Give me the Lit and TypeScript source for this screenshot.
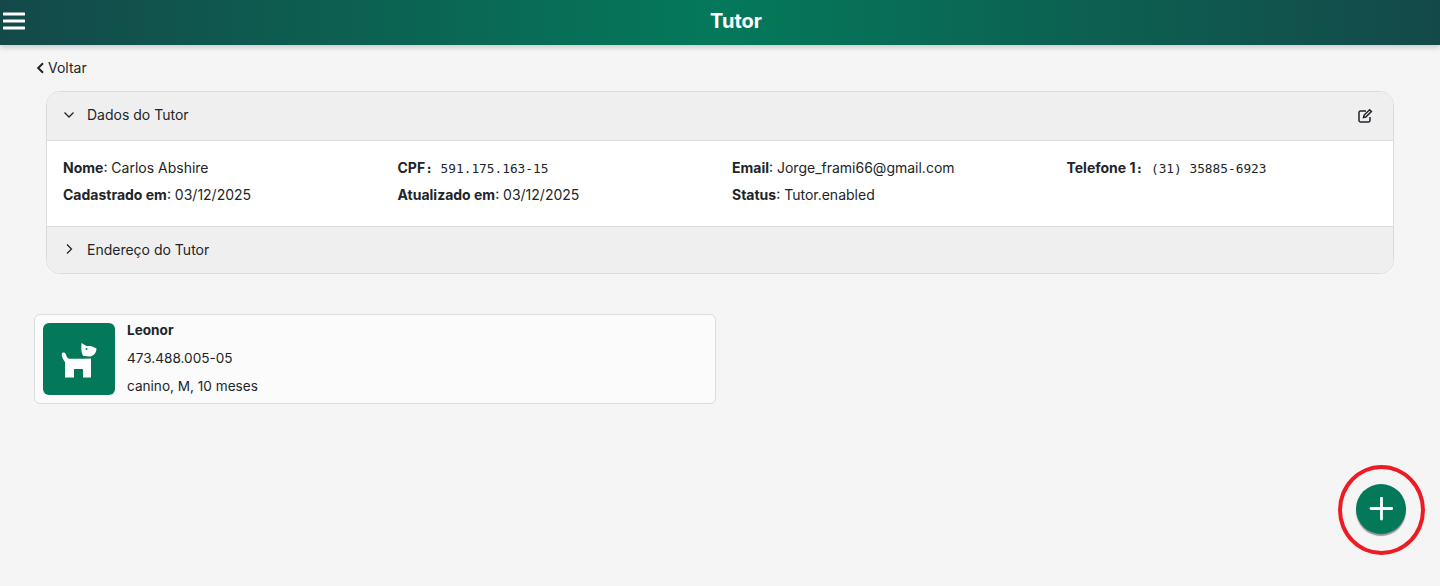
import { LitElement, html, css } from "lit";
import { customElement } from "lit/decorators.js";

@customElement("app-root")
export class AppRoot extends LitElement {
  static styles = css`
    :host { display: block; position: relative; height: 586px; overflow: hidden; background: #f5f5f5; color: #212529;
      font-family: Inter, "Liberation Sans", sans-serif; font-size: 14px; }
    .topbar { height: 45px; display: flex; align-items: center; justify-content: center; position: relative;
      background: linear-gradient(90deg, #14494a 0%, #04795a 50%, #14494a 100%); box-shadow: 0 2px 6px rgba(0,0,0,.2); }
    .topbar h1 { margin: 0; color: #fff; font-size: 20px; font-weight: 700; line-height: 24px; position: relative; left: 16px; top: -2px; }
    .menu { position: absolute; left: 3px; top: 12px; width: 22px; height: 18px; display: block; }
    .back { display: flex; align-items: center; gap: 3px; margin: 14px 0 0 36px; height: 18px; line-height: 18px; color: #212529; }
    .back svg { width: 9px; height: 12px; }
    .acc { margin: 14px 46px 0 46px; border: 1px solid #dcdcdc; border-radius: 14px; overflow: hidden; background: #fff; }
    .acc-head { display: flex; align-items: center; background: #efefef; padding: 0 20px 0 16px; color: #212529; }
    .acc-head span { position: relative; top: -1px; }
    .acc-head.a span { top: -2px; }
    .acc-head.a { height: 48px; border-bottom: 1px solid #dcdcdc; }
    .acc-head.b { height: 46px; border-top: 1px solid #dcdcdc; }
    .chev { width: 12px; height: 12px; margin-right: 12px; flex: none; position: relative; top: -1px; }
    .edit { margin-left: auto; width: 16px; height: 16px; }
    .acc-body { height: 85px; box-sizing: border-box; padding: 13px 16px 0 16px; display: grid;
      grid-template-columns: repeat(4, 334.5px); grid-auto-rows: 27px; align-items: center; }
    .acc-body b { font-weight: 700; }
    .mono { font-family: "DejaVu Sans Mono", monospace; font-size: 12.8px; }
    .card { margin: 40px 0 0 34px; width: 682px; height: 90px; box-sizing: border-box; display: flex; gap: 12px; padding: 8px;
      background: #fbfbfb; border: 1px solid #dcdcdc; border-radius: 6px; }
    .pet { width: 72px; height: 72px; box-sizing: border-box; padding-top: 2px; border-radius: 6px; background: #04795a; display: flex; align-items: center; justify-content: center; flex: none; }
    .pet svg { width: 48px; height: 44px; display: block; }
    .info { display: flex; flex-direction: column; margin-top: -7px; font-size: 13.6px; }
    .info div { height: 28px; line-height: 28px; }
    .info .n { font-weight: 700; }
    .fab { position: absolute; left: 1356px; top: 484px; width: 50px; height: 50px; border-radius: 50%; background: #04795a; border: 0; padding: 0;
      box-shadow: 0 2px 1px rgba(0,0,0,.4); display: flex; align-items: center; justify-content: center; }
    .fab svg { width: 24px; height: 24px; }
    .ring { position: absolute; left: 1338px; top: 465px; width: 87px; height: 90px; box-sizing: border-box; border: 4.5px solid #ed1c24; border-radius: 50%; pointer-events: none; }
  `;

  render() {
    return html`
      <div class="topbar">
        <svg class="menu" viewBox="0 0 22 18"><path d="M1 2h20M1 9h20M1 16h20" stroke="#fff" stroke-width="3" stroke-linecap="round" fill="none"/></svg>
        <h1>Tutor</h1>
      </div>
      <div class="back">
        <svg viewBox="0 0 9 12"><path d="M7 1.2 2.2 6 7 10.8" stroke="#212529" stroke-width="2" fill="none"/></svg>
        <span>Voltar</span>
      </div>
      <div class="acc">
        <div class="acc-head a">
          <svg class="chev" viewBox="0 0 12 12"><path d="M1.500 3.500 6 8 10.500 3.500" stroke="#212529" stroke-width="1.300" fill="none"/></svg>
          <span>Dados do Tutor</span>
          <svg class="edit" viewBox="0 0 16 16" fill="none" stroke="#212529" stroke-width="1.500">
            <path d="M13 9v3.600a1.400 1.400 0 0 1-1.400 1.400H3.400A1.400 1.400 0 0 1 2 12.600V4.400A1.400 1.400 0 0 1 3.400 3H9"/>
            <path d="M6.500 9.600 7 7.300l5.600-5.500 1.800 1.800L8.800 9.100z"/>
          </svg>
        </div>
        <div class="acc-body">
          <div><b>Nome</b>: Carlos Abshire</div>
          <div><b>CPF</b><span class="mono"><b>:</b> 591.175.163-15</span></div>
          <div><b>Email</b>: Jorge_frami66@gmail.com</div>
          <div><b>Telefone 1</b><span class="mono"><b>:</b> (31) 35885-6923</span></div>
          <div><b>Cadastrado em</b>: 03/12/2025</div>
          <div><b>Atualizado em</b>: 03/12/2025</div>
          <div><b>Status</b>: Tutor.enabled</div>
        </div>
        <div class="acc-head b">
          <svg class="chev" viewBox="0 0 12 12"><path d="M4 1.500 8.500 6 4 10.500" stroke="#212529" stroke-width="1.300" fill="none"/></svg>
          <span>Endereço do Tutor</span>
        </div>
      </div>
      <div class="card">
        <div class="pet">
          <svg viewBox="0 0 48 44">
            <path fill="#fff" d="M7.200 15c1.300-1 3-.4 3.500 1 .6 1.800 1.300 3.800 3.300 4.800H28l8 -.3V39.500H28V31H19V39.500H10V24C8.600 22 7 19.500 6.800 17.200c0-.9 0-1.700.4-2.200z"/>
            <path fill="#fff" d="M26.500 5 31.500 8H36l5.500 2.500C41.500 14 39 18 35 18.500L28.500 18C26.500 16 26 12 26.500 5z"/>
            <circle cx="31.500" cy="11" r="1" fill="#04795a"/>
          </svg>
        </div>
        <div class="info">
          <div class="n">Leonor</div>
          <div>473.488.005-05</div>
          <div>canino, M, 10 meses</div>
        </div>
      </div>
      <button class="fab" aria-label="Adicionar">
        <svg viewBox="0 0 24 24"><path d="M12.500 1v21M2 11.500h21" stroke="#fff" stroke-width="2.800" stroke-linecap="round" fill="none"/></svg>
      </button>
      <div class="ring"></div>
    `;
  }
}
